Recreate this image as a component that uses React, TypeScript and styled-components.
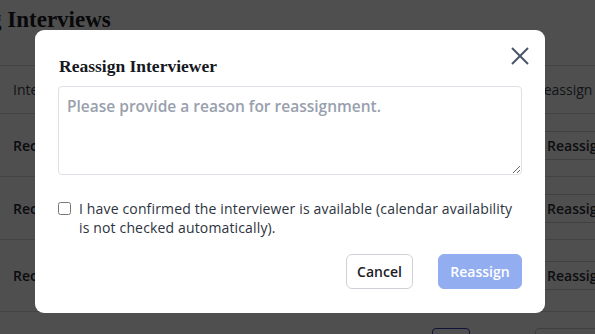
import styled, { createGlobalStyle } from "styled-components";

const GlobalStyle = createGlobalStyle`
  html, body {
    margin: 0;
    padding: 0;
    background: #ffffff;
    overflow: hidden;
  }
  body {
    font-family: "Open Sans", Lato, sans-serif;
    color: #1f2430;
  }
  * {
    box-sizing: border-box;
  }
`;

const Page = styled.div`
  width: 700px;
  margin-left: -72px;
  padding-top: 6px;
`;

const PageTitle = styled.h1`
  margin: 0 0 0 -7px;
  font-family: "Liberation Serif", serif;
  font-size: 23px;
  font-weight: 700;
  color: #1a1a24;
  line-height: 28px;
  white-space: nowrap;
`;

const Table = styled.div`
  margin-top: 31px;
  border-top: 1px solid #d8d8de;
`;

const Row = styled.div<{ $height: number }>`
  display: grid;
  grid-template-columns: 1fr 92px;
  align-items: center;
  height: ${({ $height }) => $height}px;
  padding: 0 0 0 85px;
  border-bottom: 1px solid #d8d8de;
  font-size: 14px;
  font-weight: 600;
  white-space: nowrap;
`;

const HeadCell = styled.span`
  color: #3a3f4b;
  font-weight: 500;
`;

const HeadAction = styled(HeadCell)`
  margin-left: -1px;
`;

const Cell = styled.span`
  color: #1f2430;
  font-weight: 600;
`;

const RowButton = styled.span`
  display: inline-flex;
  align-items: center;
  height: 29px;
  padding: 0 8px;
  margin-left: 2px;
  border: 1px solid #d0d0d8;
  border-radius: 5px;
  color: #2a2f3a;
  font-weight: 600;
`;

const Pager = styled.div`
  display: flex;
  gap: 65px;
  margin: 16px 0 0 504px;
`;

const PagerBox = styled.span<{ $active?: boolean }>`
  flex: none;
  width: ${({ $active }) => ($active ? 38 : 90)}px;
  height: 20px;
  border: 1px solid ${({ $active }) => ($active ? "#3b3fb8" : "#c8c8d0")};
  border-radius: 4px;
`;

const Overlay = styled.div`
  position: fixed;
  inset: 0;
  background: rgba(0, 0, 0, 0.69);
  padding: 30px 0 0 35px;
`;

const Modal = styled.div`
  position: relative;
  width: 510px;
  height: 283px;
  background: #ffffff;
  border-radius: 9px;
  padding: 24px 23px 0 23px;
  display: flex;
  flex-direction: column;
`;

const ModalTitle = styled.h2`
  margin: 0 0 0 1px;
  font-family: "Liberation Serif", serif;
  font-size: 17.5px;
  font-weight: 700;
  line-height: 24px;
  color: #161821;
`;

const CloseButton = styled.button`
  position: absolute;
  top: 14px;
  right: 13px;
  width: 24px;
  height: 24px;
  padding: 0;
  border: none;
  background: none;
  display: flex;
  align-items: center;
  justify-content: center;
  color: #4b5568;
`;

const Reason = styled.textarea`
  margin-top: 8px;
  width: 464px;
  height: 89px;
  border: 1px solid #e0e0e6;
  border-radius: 4px;
  padding: 8px 8px;
  font-family: "Open Sans", Lato, sans-serif;
  font-size: 15.5px;
  line-height: 22px;
  resize: vertical;
  outline: none;
  &::placeholder {
    color: #98a0ad;
    font-weight: 600;
  }
`;

const Confirm = styled.label`
  margin-top: 24px;
  display: flex;
  align-items: flex-start;
  gap: 8px;
  font-size: 14px;
  line-height: 19px;
  letter-spacing: 0.15px;
  font-weight: 500;
  color: #2d3340;
`;

const Box = styled.input`
  flex: none;
  width: 13px;
  height: 13px;
  margin: 3px 0 0 0;
`;

const Actions = styled.div`
  margin-top: 17px;
  display: flex;
  justify-content: flex-end;
  gap: 25px;
`;

const Button = styled.button<{ $primary?: boolean }>`
  height: 35px;
  width: ${({ $primary }) => ($primary ? 84 : 67)}px;
  padding: 0;
  border-radius: 6px;
  font-family: "Open Sans", Lato, sans-serif;
  font-size: 14px;
  font-weight: 600;
  border: 1px solid ${({ $primary }) => ($primary ? "#93aef0" : "#d0d1d8")};
  background: ${({ $primary }) => ($primary ? "#93aef0" : "#ffffff")};
  color: ${({ $primary }) => ($primary ? "#ffffff" : "#1b1d24")};
`;

const rows = ["Rec", "Rec", "Rec"];

export default function App() {
  return (
    <>
      <GlobalStyle />
      <Page>
        <PageTitle>Pending Interviews</PageTitle>
        <Table>
          <Row $height={48}>
            <HeadCell>Interviewer</HeadCell>
            <HeadAction>Reassign</HeadAction>
          </Row>
          {rows.map((r, i) => (
            <Row key={i} $height={i === 2 ? 72 : 63}>
              <Cell>{r}ruiter Name</Cell>
              <span>
                <RowButton>Reassign</RowButton>
              </span>
            </Row>
          ))}
        </Table>
        <Pager>
          <PagerBox $active />
          <PagerBox />
        </Pager>
      </Page>
      <Overlay>
        <Modal>
          <ModalTitle>Reassign Interviewer</ModalTitle>
          <CloseButton aria-label="Close">
            <svg width="20" height="20" viewBox="0 0 20 20">
              <path d="M2 2 L18 18 M18 2 L2 18" stroke="currentColor" strokeWidth="2" />
            </svg>
          </CloseButton>
          <Reason placeholder="Please provide a reason for reassignment." />
          <Confirm>
            <Box type="checkbox" />
            <span>
              I have confirmed the interviewer is available (calendar availability is not checked
              automatically).
            </span>
          </Confirm>
          <Actions>
            <Button>Cancel</Button>
            <Button $primary>Reassign</Button>
          </Actions>
        </Modal>
      </Overlay>
    </>
  );
}
